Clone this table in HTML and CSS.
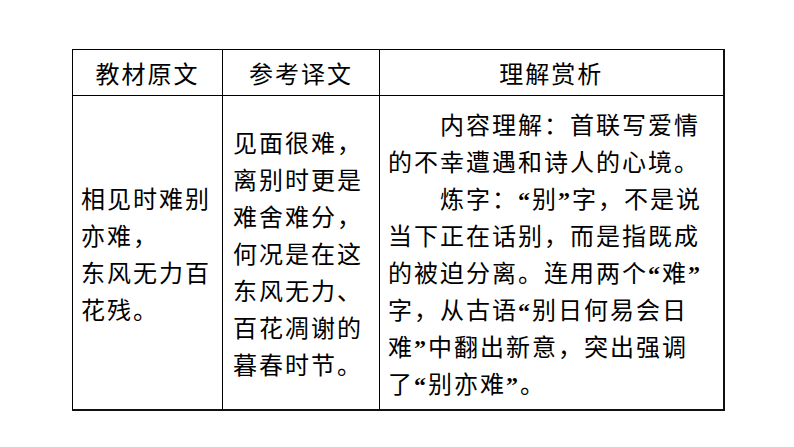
FILE: index.html
```html
<!DOCTYPE html>
<html lang="zh-CN">
<head>
<meta charset="utf-8">
<title>教材原文</title>
<link rel="stylesheet" href="styles.css">
</head>
<body>
<div class="page">
  <table class="poem">
    <colgroup>
      <col class="c1">
      <col class="c2">
      <col class="c3">
    </colgroup>
    <thead>
      <tr>
        <th>教材原文</th>
        <th>参考译文</th>
        <th>理解赏析</th>
      </tr>
    </thead>
    <tbody>
      <tr>
        <td class="orig">相见时难别亦难，<br>东风无力百花残。</td>
        <td class="trans">见面很难，离别时更是难舍难分，何况是在这东风无力、百花凋谢的暮春时节。</td>
        <td class="note">
          <p>内容理解：首联写爱情的不幸遭遇和诗人的心境。</p>
          <p>炼字：<span class="q">“</span>别<span class="q">”</span>字，不是说当下正在话别，而是指既成的被迫分离。连用两个<span class="q">“</span>难<span class="q">”</span>字，从古语<span class="q">“</span>别日何易会日难<span class="q">”</span>中翻出新意，突出强调了<span class="q">“</span>别亦难<span class="q">”</span>。</p>
        </td>
      </tr>
    </tbody>
  </table>
</div>
</body>
</html>
```

FILE: styles.css
```css
html, body {
  margin: 0;
  padding: 0;
  background: #ffffff;
}

.page {
  padding: 49px 0 0 72px;
}

.poem {
  border-collapse: collapse;
  table-layout: fixed;
  width: 651px;
  font-family: "Noto Sans CJK SC", "Noto Sans", sans-serif;
  font-size: 24px;
  letter-spacing: 2px;
  color: #000;
  border-right: 2px solid #111;
  border-bottom: 2px solid #111;
}

.c1 { width: 150px; }
.c2 { width: 157px; }
.c3 { width: 344px; }

.poem th,
.poem td {
  border: 1px solid #000;
  line-height: 37px;
}

.poem th {
  height: 45px;
  padding: 0;
  font-weight: normal;
  text-align: center;
  vertical-align: middle;
}

.poem td {
  height: 313px;
  vertical-align: middle;
  text-align: left;
}

.orig {
  padding: 0 4px 0 8px;
}

.trans {
  padding: 0 4px 0 10px;
}

.note {
  padding: 0 17px 0 8px;
}

.note p {
  margin: 0;
  text-indent: 52px;
}

.q {
  font-family: "Liberation Serif", serif;
  font-weight: bold;
  line-height: 16px;
}
```
